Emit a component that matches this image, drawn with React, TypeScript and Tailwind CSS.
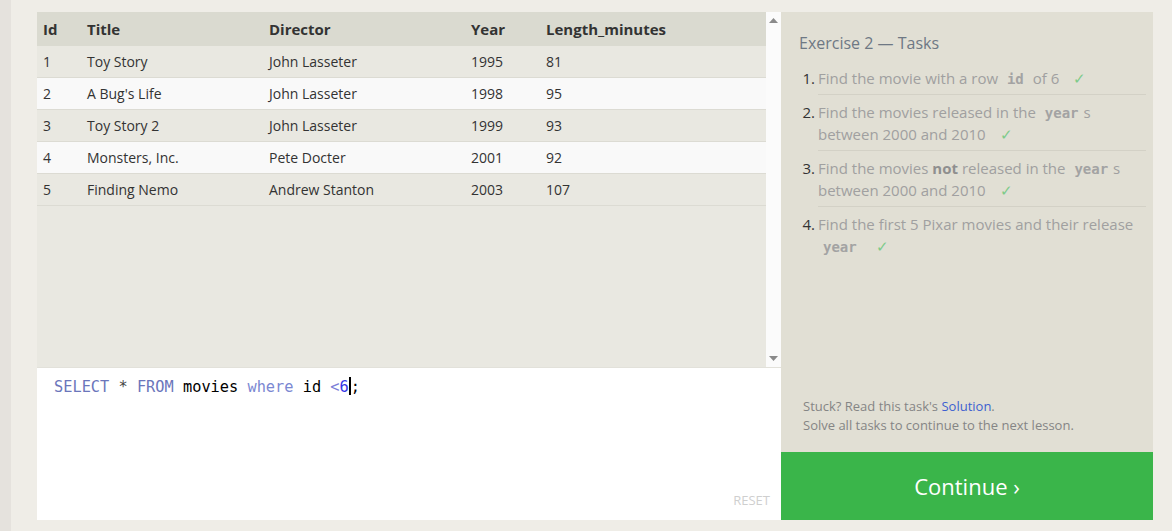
import React from 'react';

type Movie = { id: number; title: string; director: string; year: number; length: number };

const movies: Movie[] = [
  { id: 1, title: 'Toy Story', director: 'John Lasseter', year: 1995, length: 81 },
  { id: 2, title: "A Bug's Life", director: 'John Lasseter', year: 1998, length: 95 },
  { id: 3, title: 'Toy Story 2', director: 'John Lasseter', year: 1999, length: 93 },
  { id: 4, title: 'Monsters, Inc.', director: 'Pete Docter', year: 2001, length: 92 },
  { id: 5, title: 'Finding Nemo', director: 'Andrew Stanton', year: 2003, length: 107 },
];

const cols = 'grid grid-cols-[44px_182px_202px_75px_1fr]';

function Check() {
  return <span className="ml-[10px] leading-none text-[#7dcb8a]">✓</span>;
}

function Code({ children }: { children: React.ReactNode }) {
  return (
    <span className="mx-[5px] font-['DejaVu_Sans_Mono',monospace] text-[14px] font-bold leading-none text-[#a3a3a3]">
      {children}
    </span>
  );
}

function Task({ n, children, last }: { n: number; children: React.ReactNode; last?: boolean }) {
  return (
    <li className="flex items-baseline">
      <span className="w-[19px] shrink-0 pr-[3px] text-right text-[#333]">{n}.</span>
      <div className={`flex-1 py-[5.5px] ${last ? '' : 'border-b border-[#d3d1c6]'}`}>{children}</div>
    </li>
  );
}

export default function App() {
  return (
    <div className="flex h-[531px] w-[1172px] bg-[#efede7] font-['Open_Sans',sans-serif]">
      <div className="w-[11px] bg-[#e5e2dd]" />
      <div className="pl-[26px] pt-[12px]">
        <div className="grid h-[508px] w-[1116px] grid-cols-[744px_372px]">
          {/* left: results + editor */}
          <div className="flex flex-col">
            <div className="flex h-[355px]">
              <div className="flex-1 bg-[#e9e8e1] text-[#333]">
                <div className={`${cols} h-[34px] items-center bg-[#dadad0] text-[15px] font-bold`}>
                  <div className="pl-[6px]">Id</div>
                  <div className="pl-[6px]">Title</div>
                  <div className="pl-[6px]">Director</div>
                  <div className="pl-[6px]">Year</div>
                  <div className="pl-[6px]">Length_minutes</div>
                </div>
                {movies.map((m, i) => (
                  <div
                    key={m.id}
                    className={`${cols} h-[32px] items-center border-b border-[#dcdbd3] text-[14px] ${
                      i % 2 === 0 ? 'bg-[#e9e8e1]' : 'bg-[#f9f9f9]'
                    }`}
                  >
                    <div className="pl-[6px]">{m.id}</div>
                    <div className="pl-[6px]">{m.title}</div>
                    <div className="pl-[6px]">{m.director}</div>
                    <div className="pl-[6px]">{m.year}</div>
                    <div className="pl-[6px]">{m.length}</div>
                  </div>
                ))}
              </div>
              <div className="flex w-[15px] flex-col items-center justify-between bg-[#fbfbfb] py-[6px]">
                <svg width="9" height="5" viewBox="0 0 9 5"><path d="M4.5 0L9 5H0z" fill="#8a8a8a" /></svg>
                <svg width="9" height="5" viewBox="0 0 9 5"><path d="M0 0h9L4.5 5z" fill="#8a8a8a" /></svg>
              </div>
            </div>
            <div className="flex flex-1 flex-col justify-between border-t border-[#e2e1da] bg-white pl-[17px] pr-[11px] pt-[6px] pb-[10px]">
              <div className="font-['DejaVu_Sans_Mono',monospace] text-[15.3px] leading-[22px]">
                <span className="text-[#6b76bb]">SELECT</span>
                <span className="text-[#444]"> * </span>
                <span className="text-[#6b76bb]">FROM</span>
                <span className="text-black"> movies </span>
                <span className="text-[#7b88d2]">where</span>
                <span className="text-black"> id </span>
                <span className="text-[#7c7fd8]">&lt;</span>
                <span className="text-[#3535e6]">6</span>
                <span className="inline-block h-[18px] w-[2px] translate-y-[3px] bg-black" />
                <span className="text-black">;</span>
              </div>
              <div className="self-end text-[13px] text-[#cfcfcf]">RESET</div>
            </div>
          </div>

          {/* right: tasks */}
          <div className="flex flex-col bg-[#e1dfd4]">
            <div className="flex-1 pl-[18px] pr-[7px] pt-[20px]">
              <h2 className="text-[16px] leading-[22px] text-[#6e7884]">Exercise 2 — Tasks</h2>
              <ol className="mt-[7px] flex flex-col text-[15px] leading-[22px] text-[#a0a0a0]">
                <Task n={1}>
                  Find the movie with a row <Code>id</Code> of 6 <Check />
                </Task>
                <Task n={2}>
                  Find the movies released in the <Code>year</Code>s between 2000 and 2010 <Check />
                </Task>
                <Task n={3}>
                  Find the movies <b className="text-[#8f8f8f]">not</b> released in the <Code>year</Code>s between 2000 and
                  2010 <Check />
                </Task>
                <Task n={4} last>
                  Find the first 5 Pixar movies and their release <Code>year</Code> <Check />
                </Task>
              </ol>
            </div>
            <div className="px-[22px] pb-[17px] text-[13px] leading-[19px] text-[#858585]">
              <div>
                Stuck? Read this task's <span className="text-[#3d5fd0]">Solution</span>.
              </div>
              <div>Solve all tasks to continue to the next lesson.</div>
            </div>
            <div className="flex h-[68px] items-center justify-center bg-[#3ab54a] text-[22px] text-white">
              Continue ›
            </div>
          </div>
        </div>
      </div>
    </div>
  );
}
